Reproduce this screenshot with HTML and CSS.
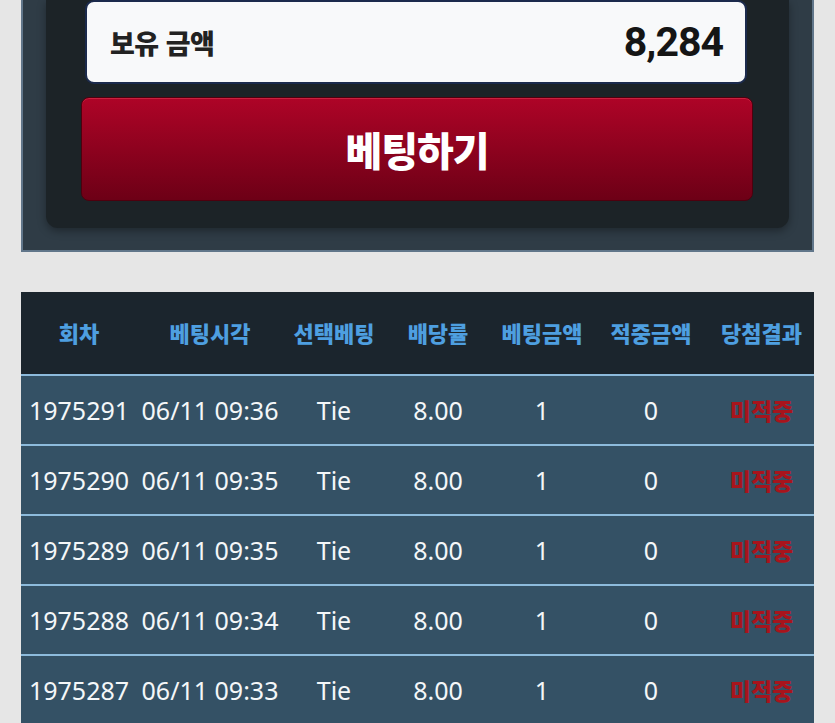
FILE: index.html
```html
<!DOCTYPE html>
<html lang="ko">
  <head>
    <meta charset="UTF-8" />
    <meta name="viewport" content="width=device-width, initial-scale=1.0" />
    <title>베팅</title>
    <link rel="stylesheet" href="styles.css">
  </head>
  <body>
    <div class="page">
      <section class="bet-panel">
        <div class="bet-box">
          <div class="balance">
            <span class="balance-label">보유 금액</span>
            <span class="balance-amount">8,284</span>
          </div>
          <button class="bet-button">베팅하기</button>
        </div>
      </section>

      <table class="history">
        <colgroup>
          <col class="col-round" />
          <col class="col-time" />
          <col class="col-pick" />
          <col class="col-odds" />
          <col class="col-bet" />
          <col class="col-win" />
          <col class="col-result" />
        </colgroup>
        <thead>
          <tr>
            <th>회차</th>
            <th>베팅시각</th>
            <th>선택베팅</th>
            <th>배당률</th>
            <th>베팅금액</th>
            <th>적중금액</th>
            <th>당첨결과</th>
          </tr>
        </thead>
        <tbody>
          <tr>
            <td>1975291</td>
            <td>06/11 09:36</td>
            <td>Tie</td>
            <td>8.00</td>
            <td>1</td>
            <td>0</td>
            <td class="result">미적중</td>
          </tr>
          <tr>
            <td>1975290</td>
            <td>06/11 09:35</td>
            <td>Tie</td>
            <td>8.00</td>
            <td>1</td>
            <td>0</td>
            <td class="result">미적중</td>
          </tr>
          <tr>
            <td>1975289</td>
            <td>06/11 09:35</td>
            <td>Tie</td>
            <td>8.00</td>
            <td>1</td>
            <td>0</td>
            <td class="result">미적중</td>
          </tr>
          <tr>
            <td>1975288</td>
            <td>06/11 09:34</td>
            <td>Tie</td>
            <td>8.00</td>
            <td>1</td>
            <td>0</td>
            <td class="result">미적중</td>
          </tr>
          <tr>
            <td>1975287</td>
            <td>06/11 09:33</td>
            <td>Tie</td>
            <td>8.00</td>
            <td>1</td>
            <td>0</td>
            <td class="result">미적중</td>
          </tr>
        </tbody>
      </table>
    </div>
  </body>
</html>
```

FILE: styles.css
```css
body {
  margin: 0;
  background-color: #e6e6e6;
  font-family: 'Noto Sans', 'Noto Sans CJK KR', sans-serif;
}

.page {
  padding: 0 21px;
}

.bet-panel {
  background-color: #2f3c46;
  border: 2px solid #61768a;
  border-top: none;
  padding: 0 23px 22px 23px;
}

.bet-box {
  background-color: #1c2327;
  border-radius: 0 0 12px 12px;
  padding: 0 36px 27px 35px;
  box-shadow: 0 3px 8px rgba(0, 0, 0, 0.35);
}

.balance {
  display: flex;
  align-items: center;
  justify-content: space-between;
  height: 80px;
  margin: 0 6px 0 4px;
  padding: 0 22px 0 23px;
  background-color: #f8f9fa;
  border: 2px solid #1b2a4c;
  border-radius: 9px;
}

.balance-label {
  font-family: 'Noto Sans CJK KR', sans-serif;
  font-size: 27px;
  font-weight: 900;
  letter-spacing: -0.5px;
  color: #222;
}

.balance-amount {
  font-family: Roboto, 'Liberation Sans', sans-serif;
  font-size: 41px;
  font-weight: bold;
  letter-spacing: -1px;
  color: #151515;
}

.bet-button {
  display: block;
  width: 100%;
  height: 104px;
  margin-top: 13px;
  border: 1px solid #4e000e;
  border-radius: 8px;
  background: linear-gradient(#ae0427, #6d0016);
  box-shadow: inset 0 1px 0 rgba(255, 90, 110, 0.35);
  color: #fff;
  font-family: 'Noto Sans CJK KR', sans-serif;
  font-size: 40px;
  font-weight: 900;
  letter-spacing: -1px;
}

.history {
  width: 100%;
  margin-top: 40px;
  border-collapse: collapse;
  table-layout: fixed;
}

.col-round { width: 116px; }
.col-time { width: 146px; }
.col-pick { width: 102px; }
.col-odds { width: 106px; }
.col-bet { width: 102px; }
.col-win { width: 116px; }
.col-result { width: 105px; }

.history th {
  height: 79px;
  padding: 0 0 3px;
  background-color: #1b252d;
  color: #4e9fe0;
  font-family: 'Noto Sans CJK KR', sans-serif;
  font-size: 22px;
  font-weight: 900;
  white-space: nowrap;
}

.history td {
  height: 68px;
  padding: 0;
  border-top: 2px solid #8dbbdc;
  background-color: #345165;
  color: #f4f7f9;
  font-size: 25px;
  text-align: center;
  white-space: nowrap;
}

.history td.result {
  color: #a8141c;
  font-family: 'Noto Sans CJK KR', sans-serif;
  font-size: 23px;
  font-weight: 900;
}
```
